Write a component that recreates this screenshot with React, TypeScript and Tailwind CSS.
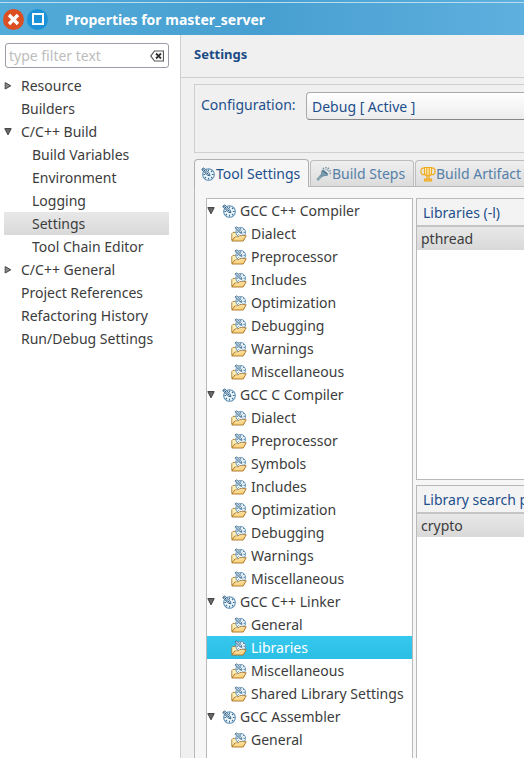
import React, { useState } from "react";

function Arrow({ open }: { open: boolean }) {
  return (
    <svg width="8" height="8" viewBox="0 0 8 8" aria-hidden="true">
      {open ? (
        <path d="M0.8 0.6h6.4L4 6.8z" fill="#6a6a6a" stroke="#3c3c3c" strokeWidth="1" />
      ) : (
        <path d="M1.200 0.6v6.400L6.800 3.800z" fill="#8a8a8a" stroke="#444" strokeWidth="1" />
      )}
    </svg>
  );
}

function DialShape() {
  return (
    <>
      <circle cx="7.5" cy="7.5" r="5.8" fill="#eef7fc" stroke="#5f8db0" strokeWidth="1.1" />
      <path
        d="M7.5 2.4v1.800M7.5 10.8v1.800M10.8 7.5h1.800M2.400 7.5h1.800M10 5l1.200-1.200M10 10l1.200 1.200M5 10l-1.200 1.200"
        stroke="#39709c"
        strokeWidth="1.1"
      />
      <path d="M0.6 2.6L2.800 0.8L8.400 6.200L9 8.800L6.400 8.200z" fill="#cfe2ee" stroke="#2f5f86" strokeWidth="0.8" />
      <path d="M1.5 1.6l7 7" stroke="#1d4a70" strokeWidth="1.1" strokeDasharray="1.3 0.8" />
    </>
  );
}

function DialIcon() {
  return (
    <svg className="shrink-0" width="14" height="14" viewBox="0 0 14 14" aria-hidden="true">
      <DialShape />
    </svg>
  );
}

function FolderIcon() {
  return (
    <svg className="shrink-0" width="16" height="16" viewBox="0 0 16 16" aria-hidden="true">
      <path d="M0.8 14V7.600L2 6.400h2.600L6 7.600h7v6z" fill="#fff0b8" stroke="#a9782d" strokeWidth="0.9" />
      <g transform="translate(3.400 0) scale(0.84)">
        <DialShape />
      </g>
      <path d="M0.8 15L3.800 11H7.200L8.600 9.800H15.200L12.200 15z" fill="#fbd583" stroke="#a87225" strokeWidth="0.9" strokeLinejoin="round" />
      <path d="M4.400 11.900h3.200l1.400-1.100h4.700" stroke="#fff0c0" strokeWidth="0.9" fill="none" />
    </svg>
  );
}

function StepsIcon() {
  return (
    <svg className="shrink-0" width="16" height="16" viewBox="0 0 16 16" aria-hidden="true">
      <path d="M2 13.200L5 10" stroke="#8aa3b1" strokeWidth="2.800" strokeLinecap="round" />
      <path d="M5 10.400L6 4.600L11.800 9z" fill="#7c9dae" stroke="#6b8ea2" strokeLinejoin="round" />
      <path d="M6.600 4.200l4.800 4" stroke="#4f788f" strokeWidth="1.600" />
      <path d="M7 1.800l1 1.600M10 1l-.4 2.600M12.800 1.800l-1.800 2.600M14.800 4.400l-2.600 1M15 7.400l-2-.2" stroke="#7898aa" strokeWidth="1.500" strokeDasharray="1.500 0.600" />
    </svg>
  );
}

function TrophyIcon() {
  return (
    <svg className="shrink-0" width="16" height="16" viewBox="0 0 16 16" aria-hidden="true">
      <g fill="none" stroke="#efab1f" strokeWidth="1.200">
        <path d="M4.500 1.500h7v5.500c0 1.800-1.300 2.800-3.500 2.800S4.500 8.800 4.500 7z" fill="#fff1c5" />
        <path d="M4.500 2.200H2.400L1 3.800v3l1.400 1.800h2.800M11.500 2.200h2.100L15 3.800v3l-1.400 1.800h-2.800" />
        <path d="M6.800 2v7.500M9.200 2v7.500M7 10v3M9 10v3" />
        <path d="M4.500 13.200h7v1.600h-7z" fill="#ffd878" />
      </g>
    </svg>
  );
}

type NavItem = { label: string; state?: "open" | "closed"; child?: boolean };

const navItems: NavItem[] = [
  { label: "Resource", state: "closed" },
  { label: "Builders" },
  { label: "C/C++ Build", state: "open" },
  { label: "Build Variables", child: true },
  { label: "Environment", child: true },
  { label: "Logging", child: true },
  { label: "Settings", child: true },
  { label: "Tool Chain Editor", child: true },
  { label: "C/C++ General", state: "closed" },
  { label: "Project References" },
  { label: "Refactoring History" },
  { label: "Run/Debug Settings" },
];

const toolGroups = [
  {
    name: "GCC C++ Compiler",
    options: ["Dialect", "Preprocessor", "Includes", "Optimization", "Debugging", "Warnings", "Miscellaneous"],
  },
  {
    name: "GCC C Compiler",
    options: ["Dialect", "Preprocessor", "Symbols", "Includes", "Optimization", "Debugging", "Warnings", "Miscellaneous"],
  },
  { name: "GCC C++ Linker", options: ["General", "Libraries", "Miscellaneous", "Shared Library Settings"] },
  { name: "GCC Assembler", options: ["General"] },
];

function TitleBar() {
  return (
    <header className="h-[35px] shrink-0 bg-linear-to-r from-[#52abd8] via-[#479fd1] to-[#5eb0de] pt-[2px] text-white">
      <div className="flex h-[33px] items-center border-t border-[#b5def0] pl-[3px]">
        <button type="button" aria-label="Close" className="flex size-[21px] items-center justify-center rounded-full bg-[#dc4f23]">
          <svg width="13" height="13" viewBox="0 0 13 13" aria-hidden="true">
            <path d="M2 2l9 9M11 2l-9 9" stroke="#fff" strokeWidth="3.400" />
          </svg>
        </button>
        <button type="button" aria-label="Maximize" className="ml-[3px] flex size-[21px] items-center justify-center rounded-full bg-[#1c93d8]">
          <span className="size-3 border-2 border-white" />
        </button>
        <h1 className="ml-[17px] text-[14px] font-bold whitespace-nowrap">Properties for master_server</h1>
      </div>
    </header>
  );
}

function Sidebar() {
  const [selected, setSelected] = useState("Settings");
  return (
    <aside className="w-[181px] shrink-0 border-r border-[#cfcfcf] bg-white pt-2">
      <div className="mr-[11px] ml-[5px] flex h-[25px] items-center rounded-[3px] border border-[#9c9ca6] pr-1 pl-[3px]">
        <input
          type="text"
          aria-label="Filter"
          placeholder="type filter text"
          className="min-w-0 flex-1 bg-transparent text-[14px] leading-5 outline-none placeholder:text-[#bdbdbd]"
        />
        <button type="button" aria-label="Clear filter">
          <svg className="block" width="14" height="12" viewBox="0 0 14 12" aria-hidden="true">
            <path d="M4.500 1h9v10h-9L.8 6z" fill="#fff" stroke="#555" strokeWidth="1.200" />
            <path d="M6 3.500l5 5M11 3.500l-5 5" stroke="#333" strokeWidth="1.800" />
          </svg>
        </button>
      </div>
      <nav className="mt-[6px] mr-[11px] ml-1" aria-label="Property pages">
        {navItems.map((item) => (
          <button
            key={item.label}
            type="button"
            onClick={() => setSelected(item.label)}
            className={`flex h-[23px] w-full items-center text-left whitespace-nowrap ${
              selected === item.label ? "bg-linear-to-b from-[#e8e8e8] to-[#d9d9d9]" : ""
            }`}
          >
            <span className={item.child ? "w-7 shrink-0" : "w-[17px] shrink-0"}>
              {item.state && <Arrow open={item.state === "open"} />}
            </span>
            {item.label}
          </button>
        ))}
      </nav>
    </aside>
  );
}

function ToolTree() {
  const [selected, setSelected] = useState("GCC C++ Linker/Libraries");
  return (
    <ul className="w-[207px] shrink-0 border border-b-0 border-[#b9b9b9] bg-white">
      {toolGroups.map((group) => (
        <li key={group.name}>
          <button type="button" className="flex h-[23px] w-full items-center whitespace-nowrap">
            <span className="w-[15px] shrink-0">
              <Arrow open />
            </span>
            <DialIcon />
            <span className="ml-1">{group.name}</span>
          </button>
          <ul>
            {group.options.map((option) => {
              const id = `${group.name}/${option}`;
              return (
                <li key={option}>
                  <button
                    type="button"
                    onClick={() => setSelected(id)}
                    className={`flex h-[23px] w-full items-center gap-1 pl-6 whitespace-nowrap ${
                      selected === id ? "bg-linear-to-b from-[#36c8ee] to-[#2bbfe5] text-white" : ""
                    }`}
                  >
                    <FolderIcon />
                    {option}
                  </button>
                </li>
              );
            })}
          </ul>
        </li>
      ))}
    </ul>
  );
}

function LibraryList({ title, entry, className }: { title: string; entry: string; className: string }) {
  return (
    <section className={`border border-[#b9b9b9] bg-white ${className}`}>
      <h3 className="h-7 border-b-2 border-[#c4c4c4] bg-[#f3f3f3] pl-[6px] leading-[28px] whitespace-nowrap text-[#1d4f8c]">{title}</h3>
      <ul>
        <li className="h-[23px] bg-linear-to-b from-[#e8e8e8] to-[#d9d9d9] pl-1 leading-[23px]">{entry}</li>
      </ul>
    </section>
  );
}

const tabBase = "flex items-center rounded-t-[4px] border border-b-0 whitespace-nowrap";
const tabIdle = "h-[26px] border-[#bdbdbd] bg-linear-to-b from-[#efefef] to-[#dcdcdc] text-[#557fa8]";

export default function App() {
  return (
    <div className="flex min-h-screen flex-col overflow-hidden bg-[#f0f0f0] font-['Noto_Sans','Open_Sans',sans-serif] text-[14px] text-[#3c3c3c]">
      <TitleBar />
      <div className="flex flex-1">
        <Sidebar />
        <main className="flex min-w-0 flex-1 flex-col overflow-hidden">
          <h2 className="h-[43px] shrink-0 border-b border-[#cfcfcf] pl-[13px] text-[13px] leading-[39px] font-bold text-[#1b4b84]">Settings</h2>
          <div className="-mr-10 flex flex-1 flex-col pl-[13px]">
            <div className="mt-[6px] flex h-[69px] shrink-0 items-start border border-[#cfcfcf] pt-[7px] pl-[6px] text-[#1d4f8c]">
              <label htmlFor="configuration" className="w-[105px] shrink-0 leading-[26px]">
                Configuration:
              </label>
              <select
                id="configuration"
                className="h-7 min-w-0 flex-1 appearance-none rounded-[4px] border border-[#aaaaaa] border-b-[#858585] bg-linear-to-b from-white to-[#ececec] pl-[5px]"
              >
                <option>Debug [ Active ]</option>
              </select>
            </div>
            <div role="tablist" className="mt-[6px] flex shrink-0 items-end gap-px">
              <button type="button" role="tab" aria-selected="true" className={`${tabBase} relative z-10 -mb-px h-7 w-[115px] gap-px border-[#b0b0b0] bg-[#f6f6f6] pl-[6px] text-[#1d4f8c]`}>
                <DialIcon />
                Tool Settings
              </button>
              <button type="button" role="tab" aria-selected="false" className={`${tabBase} ${tabIdle} w-[104px] pl-[5px]`}>
                <StepsIcon />
                Build Steps
              </button>
              <button type="button" role="tab" aria-selected="false" className={`${tabBase} ${tabIdle} w-[134px] pl-1`}>
                <TrophyIcon />
                Build Artifact
              </button>
            </div>
            <div role="tabpanel" className="flex flex-1 gap-[3px] border-t border-l border-[#b9b9b9] bg-[#f6f6f6] pt-[11px] pl-[11px]">
              <ToolTree />
              <div className="flex min-w-0 flex-1 flex-col gap-[5px]">
                <LibraryList title="Libraries (-l)" entry="pthread" className="h-[282px]" />
                <LibraryList title="Library search path (-L)" entry="crypto" className="flex-1 border-b-0" />
              </div>
            </div>
          </div>
        </main>
      </div>
    </div>
  );
}
